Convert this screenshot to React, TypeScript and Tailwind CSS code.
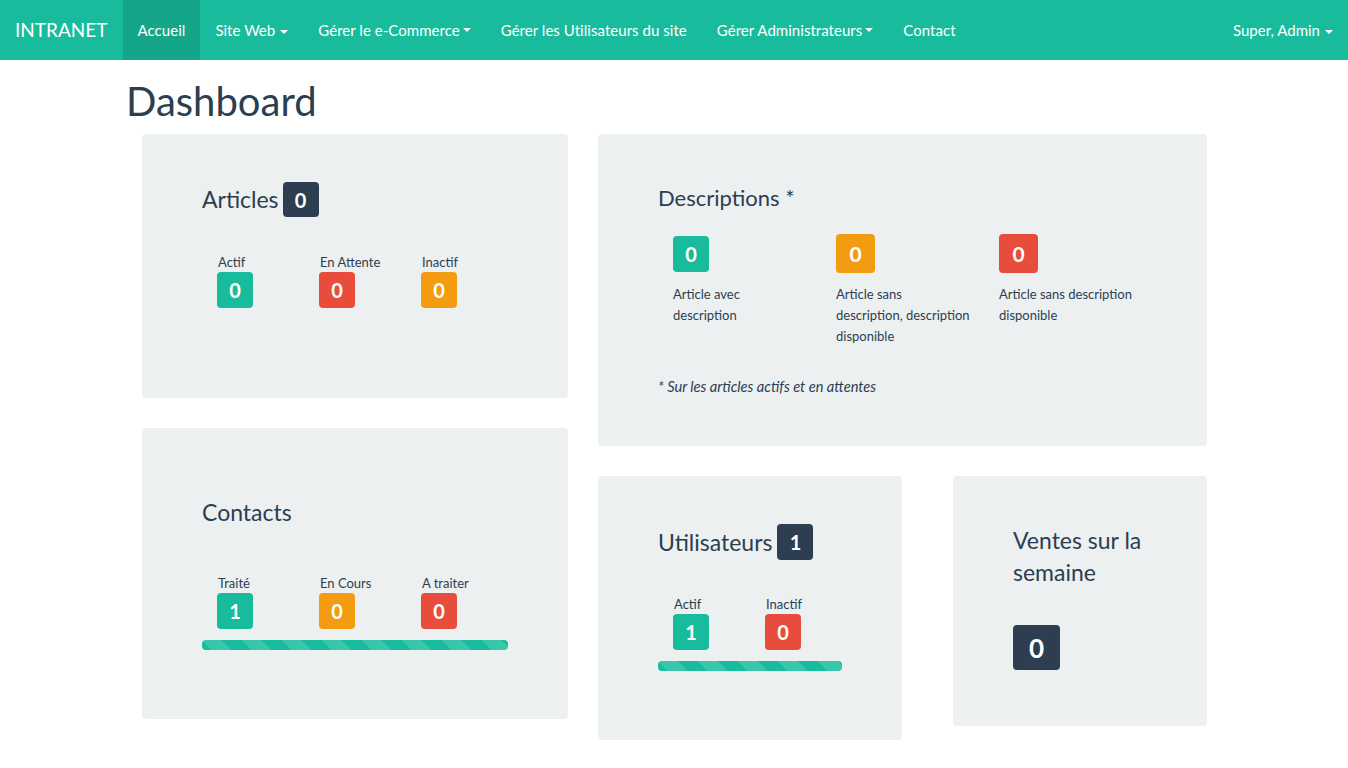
import type { ReactNode } from "react";

const tone = {
  green: "bg-[#18bc9c]",
  red: "bg-[#e74c3c]",
  orange: "bg-[#f39c12]",
  dark: "bg-[#2c3e50]",
};

type Tone = keyof typeof tone;

function Num({ value, color, size = "sm" }: { value: number; color: Tone; size?: "sm" | "md" | "lg" }) {
  const dims =
    size === "lg"
      ? "h-[45px] w-[47px] text-[26px]"
      : size === "md"
        ? "h-[39px] w-[39px] text-[21px]"
        : "h-[36px] w-[36px] text-[20px]";
  return (
    <span
      className={`flex shrink-0 items-center justify-center rounded-[4px] font-bold leading-none text-white ${tone[color]} ${dims}`}
    >
      {value}
    </span>
  );
}

function Caret() {
  return (
    <span className="ml-[3px] inline-block h-0 w-0 border-x-[4px] border-t-[4px] border-x-transparent border-t-white align-middle" />
  );
}

function Stat({ label, value, color, width }: { label: string; value: number; color: Tone; width: string }) {
  return (
    <div className={`flex flex-col ${width}`}>
      <span className="pl-[1px] text-[13px] leading-[18px]">{label}</span>
      <div className="mt-[1px]">
        <Num value={value} color={color} />
      </div>
    </div>
  );
}

function Progress({ width }: { width: string }) {
  return (
    <div
      className={`h-[10px] rounded-[4px] bg-[#18bc9c] bg-[linear-gradient(45deg,rgba(255,255,255,.15)_25%,transparent_25%,transparent_50%,rgba(255,255,255,.15)_50%,rgba(255,255,255,.15)_75%,transparent_75%,transparent)] bg-size-[40px_40px] ${width}`}
    />
  );
}

function Well({ className, children }: { className: string; children: ReactNode }) {
  return <div className={`rounded-[4px] bg-[#ecf0f1] pl-[60px] ${className}`}>{children}</div>;
}

const nav = [
  { label: "Site Web", caret: true, gap: true },
  { label: "Gérer le e-Commerce", caret: true },
  { label: "Gérer les Utilisateurs du site" },
  { label: "Gérer Administrateurs", caret: true },
  { label: "Contact" },
];

export default function App() {
  return (
    <div className="min-h-[768px] bg-white font-['Lato','Open_Sans',sans-serif] text-[#2c3e50]">
      <nav className="flex h-[60px] items-center bg-[#18bc9c] text-white">
        <span className="px-[15px] text-[19px] leading-[60px]">INTRANET</span>
        <ul className="flex h-full items-center text-[15px] tracking-[0.04px]">
          <li className="flex h-full items-center bg-[#15a589] px-[15px]">Accueil</li>
          {nav.map((n) => (
            <li key={n.label} className="flex h-full items-center px-[15px]">
              {n.label}
              {n.caret && (n.gap ? <span className="ml-[2px]"><Caret /></span> : <Caret />)}
            </li>
          ))}
        </ul>
        <div className="ml-auto flex h-full items-center px-[15px] text-[15px]">
          Super, Admin
          <span className="ml-[2px]">
            <Caret />
          </span>
        </div>
      </nav>

      <h1 className="mt-[20px] mb-[11px] pl-[126px] text-[40px] leading-[43px]">Dashboard</h1>

      <div className="flex gap-[30px] pl-[142px]">
        <div className="flex w-[426px] flex-col gap-[30px]">
          <Well className="h-[264px] pt-[48px]">
            <div className="flex h-[35px] items-center gap-[4px]">
              <span className="text-[23px]">Articles</span>
              <span className="flex h-[35px] w-[36px] items-center justify-center rounded-[4px] bg-[#2c3e50] text-[20px] font-bold text-white">
                0
              </span>
            </div>
            <div className="mt-[36px] ml-[15px] flex">
              <Stat label="Actif" value={0} color="green" width="w-[102px]" />
              <Stat label="En Attente" value={0} color="red" width="w-[102px]" />
              <Stat label="Inactif" value={0} color="orange" width="w-[102px]" />
            </div>
          </Well>

          <Well className="h-[291px] pt-[67px]">
            <div className="flex h-[35px] items-center">
              <span className="text-[23px]">Contacts</span>
            </div>
            <div className="mt-[44px] ml-[15px] flex">
              <Stat label="Traité" value={1} color="green" width="w-[102px]" />
              <Stat label="En Cours" value={0} color="orange" width="w-[102px]" />
              <Stat label="A traiter" value={0} color="red" width="w-[102px]" />
            </div>
            <div className="mt-[11px]">
              <Progress width="w-[306px]" />
            </div>
          </Well>
        </div>

        <div className="flex w-[609px] flex-col gap-[30px]">
          <Well className="h-[312px] pt-[51px]">
            <div className="text-[22px] leading-[26px]">Descriptions *</div>
            <div className="mt-[23px] ml-[15px] flex">
              {[
                { color: "green" as Tone, size: "sm" as const, text: ["Article avec", "description"] },
                { color: "orange" as Tone, size: "md" as const, text: ["Article sans", "description, description", "disponible"] },
                { color: "red" as Tone, size: "md" as const, text: ["Article sans description", "disponible"] },
              ].map((c, i) => (
                <div key={i} className="w-[163px]">
                  <div className="flex h-[39px] items-center">
                    <Num value={0} color={c.color} size={c.size} />
                  </div>
                  <div className="mt-[11px] text-[13px] leading-[21px]">
                    {c.text.map((t) => (
                      <div key={t} className="whitespace-nowrap">
                        {t}
                      </div>
                    ))}
                  </div>
                </div>
              ))}
            </div>
            <p className="mt-[30px] text-[14.6px] leading-[20px] italic">* Sur les articles actifs et en attentes</p>
          </Well>

          <div className="flex items-start gap-[51px]">
            <Well className="h-[264px] w-[304px] pt-[48px]">
              <div className="flex h-[36px] items-center gap-[5px]">
                <span className="text-[23px]">Utilisateurs</span>
                <span className="flex h-[36px] w-[36px] items-center justify-center rounded-[4px] bg-[#2c3e50] text-[20px] font-bold text-white">
                  1
                </span>
              </div>
              <div className="mt-[35px] ml-[15px] flex">
                <Stat label="Actif" value={1} color="green" width="w-[92px]" />
                <Stat label="Inactif" value={0} color="red" width="w-[92px]" />
              </div>
              <div className="mt-[11px]">
                <Progress width="w-[184px]" />
              </div>
            </Well>

            <Well className="h-[250px] w-[254px] pt-[48px]">
              <div className="text-[23px] leading-[32px]">
                Ventes sur la
                <br />
                semaine
              </div>
              <div className="mt-[37px]">
                <Num value={0} color="dark" size="lg" />
              </div>
            </Well>
          </div>
        </div>
      </div>
    </div>
  );
}
